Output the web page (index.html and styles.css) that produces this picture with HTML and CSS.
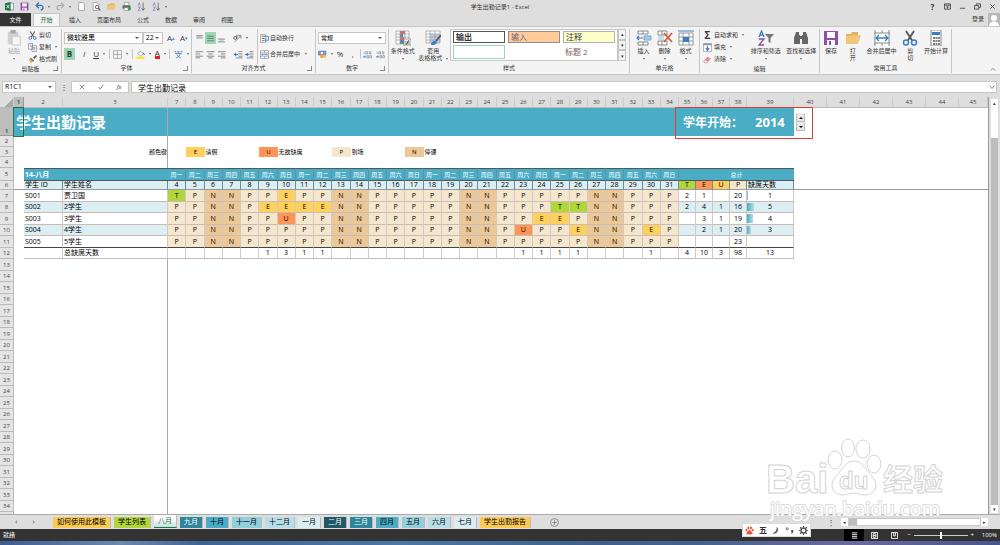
FILE: index.html
```html
<!DOCTYPE html>
<html lang="zh-CN">
<head>
    <meta charset="UTF-8">
    <meta name="viewport" content="width=device-width, initial-scale=1.0">
    <title>学生出勤记录1 - Excel</title>
    <link rel="stylesheet" href="styles.css">
</head>
<body>
    <!-- shared icons -->
    <svg class="sprite" aria-hidden="true">
        <symbol id="i-save" viewBox="0 0 16 16"><path d="M1 1h14v14H1z" fill="#8e4fa8"/><path d="M4 2h8v6H4zM4 10h8v5H4z" fill="#fff"/><path d="M6 11h2v4H6z" fill="#8e4fa8"/></symbol>
        <symbol id="i-folder" viewBox="0 0 16 16"><path d="M1 13V4h5l1-2h6v3" fill="#e2b25c"/><path d="M1 14V6l12-1h3l-3 9z" fill="#f0c67c"/></symbol>
        <symbol id="i-cut" viewBox="0 0 16 16" fill="none"><path d="M4 1l6.500 10M12 1L5.500 11" stroke="#555" stroke-width="1.800"/><circle cx="4" cy="12.500" r="2.500" stroke="#3c7fc0" stroke-width="1.500"/><circle cx="12" cy="12.500" r="2.500" stroke="#3c7fc0" stroke-width="1.500"/></symbol>
        <symbol id="i-copy" viewBox="0 0 16 16"><path d="M1 1h7v10H1zM7 5h8v10H7z" fill="#fff" stroke="#666"/><path d="M3 4h3M3 6h3M9 8h4M9 10h4M9 12h4" stroke="#3c7fc0"/></symbol>
        <symbol id="i-brush" viewBox="0 0 16 16"><path d="M15 1l-5 5" stroke="#555" stroke-width="3"/><path d="M5 5l6 5-2 2-6-5z" fill="#666"/><path d="M1 8l3-1 4 4-2 4z" fill="#eda345"/></symbol>
        <symbol id="i-paste" viewBox="0 0 16 18"><path d="M1 2h12v14H1z" fill="#d2d2d2"/><path d="M4 0h6v4H4z" fill="#aaa"/><path d="M6 7h9v10H6z" fill="#f6f6f6" stroke="#c2c2c2"/></symbol>
        <symbol id="i-top" viewBox="0 0 16 16"><path d="M2 3h12M2 7h12" stroke="#777" stroke-width="1.500"/><path d="M4 5h8" stroke="#999"/></symbol>
        <symbol id="i-mid" viewBox="0 0 16 16"><path d="M2 4h12M2 8h12M2 12h12" stroke="#557a63" stroke-width="1.500"/></symbol>
        <symbol id="i-bot" viewBox="0 0 16 16"><path d="M2 9h12M2 14h12" stroke="#777" stroke-width="1.500"/><path d="M4 11h8" stroke="#999"/></symbol>
        <symbol id="i-left" viewBox="0 0 16 16"><path d="M1 3h13M1 7h8M1 11h13M1 14h8" stroke="#777" stroke-width="1.500"/></symbol>
        <symbol id="i-center" viewBox="0 0 16 16"><path d="M1 3h14M4 7h8M1 11h14M4 14h8" stroke="#777" stroke-width="1.500"/></symbol>
        <symbol id="i-right" viewBox="0 0 16 16"><path d="M2 3h13M7 7h8M2 11h13M7 14h8" stroke="#777" stroke-width="1.500"/></symbol>
        <symbol id="i-outdent" viewBox="0 0 16 16"><path d="M8 3h7M8 7h7M8 11h7M3 14h12" stroke="#777" stroke-width="1.500"/><path d="M7 8H1l3-3M1 8l3 3" stroke="#3c7fc0" stroke-width="1.800" fill="none"/></symbol>
        <symbol id="i-indent" viewBox="0 0 16 16"><path d="M8 3h7M8 7h7M8 11h7M3 14h12" stroke="#777" stroke-width="1.500"/><path d="M0 8h6L3 5M6 8l-3 3" stroke="#3c7fc0" stroke-width="1.800" fill="none"/></symbol>
        <symbol id="i-angle" viewBox="0 0 16 16" fill="none"><path d="M3 14L14 3M14 3v5M14 3H9" stroke="#777" stroke-width="1.500"/><circle cx="4" cy="7" r="2.500" stroke="#555" stroke-width="1.500"/><path d="M7 1v6" stroke="#555" stroke-width="1.500"/></symbol>
        <symbol id="i-wrap" viewBox="0 0 16 16" fill="none"><path d="M1 1h9v14H1z" fill="#fff" stroke="#777"/><path d="M3 4h9M3 8h5M3 12h4" stroke="#555" stroke-width="1.500"/><path d="M12 4h3v7H9m2-3l-3 3 3 3" stroke="#3c7fc0" stroke-width="1.500"/></symbol>
        <symbol id="i-merge" viewBox="0 0 16 16" fill="none"><path d="M1 1h14v14H1zM1 5h14M1 11h14M8 1v4M8 11v4" fill="#fff" stroke="#777"/><path d="M3 8h10M5 6L3 8l2 2M11 6l2 2-2 2" stroke="#3c7fc0" stroke-width="1.200"/></symbol>
        <symbol id="i-border" viewBox="0 0 16 16" fill="none"><path d="M1 1h14v14H1zM8 1v14M1 8h14" stroke="#888"/></symbol>
        <symbol id="i-fill" viewBox="0 0 16 16"><path d="M3 6l5-4 5 5-5 4z" fill="#fff" stroke="#666"/><path d="M13 5l2 4" stroke="#3c7fc0" stroke-width="2"/><path d="M1 12h14v4H1z" fill="#f5ee1e"/></symbol>
        <symbol id="i-phon" viewBox="0 0 16 16" fill="none"><path d="M1 3h3M6 3h4M12 3h3M2 6h12M8 4v2M4 14c4-1 6-4 7-8M5 8c1 3 4 5 7 6" stroke="#3c7fc0" stroke-width="1.500"/></symbol>
        <symbol id="i-money" viewBox="0 0 16 16"><path d="M1 2h13v7H1z" fill="#7aa4cf" stroke="#557"/><circle cx="7" cy="5.500" r="2" fill="#fff"/><path d="M4 8h6v6H4z" fill="#eda345"/><path d="M9 10h5v4H9z" fill="#f2c26b"/></symbol>
        <symbol id="i-dec" viewBox="0 0 16 16" fill="none"><path d="M2 3v4M5 3h3v4H5zM11 3h3v4h-3zM7 10h3v4H7zM12 10h3v4h-3z" stroke="#777"/><path d="M6 12H1l2-2M1 12l2 2" stroke="#3c7fc0" stroke-width="1.500"/></symbol>
        <symbol id="i-cond" viewBox="0 0 16 16"><path d="M1 1h13v13H1z" fill="#fff"/><path d="M5 1h5v3H5zM5 7h4v3H5z" fill="#d9694f"/><path d="M5 4h3v3H5zM5 10h5v4H5z" fill="#4b83bd"/><path d="M1 1h13v13H1zM1 4h13M1 7h13M1 10h13M5 1v13M10 1v13" fill="none" stroke="#999" stroke-width=".7"/><path d="M9 9h7v7H9z" fill="#fff" stroke="#777" stroke-width=".7"/><path d="M10 12h5M10 14h5M14 10l-3 5" stroke="#444" stroke-width=".8"/></symbol>
        <symbol id="i-tbl" viewBox="0 0 16 16"><path d="M1 1h14v12H1z" fill="#fff"/><path d="M5 4h10v9H5z" fill="#b8d2ea"/><path d="M1 1h14v12H1zM1 4h14M1 7h14M1 10h14M5 1v12M10 1v12" fill="none" stroke="#999" stroke-width=".7"/><path d="M16 5l-5 6" stroke="#555" stroke-width="1.800"/><path d="M6 15c0-4 4-5 6-3-1 3-3 3-6 3z" fill="#3c7fc0"/></symbol>
        <symbol id="i-ins" viewBox="0 0 16 16"><path d="M2 1h10v3H2zM2 12h10v3H2zM7 1v3M7 12v3" fill="#fff" stroke="#888"/><path d="M8 6h7v4H8z" fill="#a9cbe8" stroke="#7aa4cf"/><path d="M7 8H1m2-2L1 8l2 2" fill="none" stroke="#3c7fc0" stroke-width="1.200"/></symbol>
        <symbol id="i-del" viewBox="0 0 16 16"><path d="M1 1h9v4H1zM1 11h9v4H1zM5 1v4M5 11v4" fill="#fff" stroke="#888"/><path d="M1 6h6v4H1z" fill="#c6ddf0"/><path d="M7 3l8 9M15 3l-8 9" stroke="#d9593d" stroke-width="1.800"/></symbol>
        <symbol id="i-fmt" viewBox="0 0 16 16"><path d="M1 3h14v12H1zM1 7h14M1 11h14M5 3v12M11 3v12" fill="#fff" stroke="#999"/><path d="M5 7h6v5H5z" fill="#3c7fc0"/><path d="M2 1h12M1 0v2M15 0v2" stroke="#3c7fc0"/></symbol>
        <symbol id="i-down" viewBox="0 0 16 16"><path d="M1 1h14v14H1z" fill="#fff" stroke="#777"/><path d="M1 1h14v3H1z" fill="#999"/><path d="M8 5v7M5 9l3 4 3-4" fill="none" stroke="#3c7fc0" stroke-width="2"/></symbol>
        <symbol id="i-erase" viewBox="0 0 16 16"><path d="M1 11l7-8 6 3-7 8H3z" fill="#e8879c"/><path d="M1 11l3-3 5 4-2 2H3z" fill="#fbd9df" stroke="#c66" stroke-width=".7"/></symbol>
        <symbol id="i-sort" viewBox="0 0 16 16" fill="none"><path d="M1 7l2.500-6L6 7M2 5h3" stroke="#3c7fc0" stroke-width="1.300"/><path d="M1 9h5l-5 6h5" stroke="#8e4fa8" stroke-width="1.300"/><path d="M7 4h9l-3.500 4v5l-2-1V8z" fill="#777"/></symbol>
        <symbol id="i-find" viewBox="0 0 16 16"><path d="M3 2h3v3h1v9H1V8zM13 2h-3v3H9v9h6V8z" fill="#666"/><path d="M6 6h4v3H6z" fill="#666"/></symbol>
        <symbol id="i-fit" viewBox="0 0 16 16" fill="none"><path d="M1 0h14v16H1z" fill="#fff"/><path d="M1 0v16M15 0v16M0 3h16M0 13h16M8 0v3M8 13v3" stroke="#888"/><path d="M2 8h12M5 5L2 8l3 3M11 5l3 3-3 3" stroke="#3c7fc0" stroke-width="1.300"/></symbol>
        <symbol id="i-calc" viewBox="0 0 16 16"><path d="M3 0h10v16H3z" fill="#fff" stroke="#888"/><path d="M4 2h8v3H4z" fill="#3c7fc0"/><path d="M5 8h2M7.500 8h2M10 8h2M5 11h2M7.500 11h2M10 11h2M5 14h2M7.500 14h2M10 14h2" stroke="#555" stroke-width="1.500"/></symbol>
        <symbol id="i-az" viewBox="0 0 16 16" fill="none"><path d="M2 7l2-6 2 6M2 9h4l-4 6h4" stroke="#8a7bb5" stroke-width="1.300"/><path d="M11 1v13M8 11l3 4 3-4" stroke="#666" stroke-width="1.500"/></symbol>
        <symbol id="i-paw" viewBox="0 0 16 16"><ellipse cx="2.500" cy="7" rx="1.800" ry="2.300"/><ellipse cx="6" cy="3.500" rx="1.800" ry="2.500"/><ellipse cx="10.500" cy="3.500" rx="1.800" ry="2.500"/><ellipse cx="13.700" cy="7" rx="1.800" ry="2.300"/><path d="M8 7c2 0 3 3 5 4.500S12 16 8 14.500C4 16 1 14 3 11.500S6 7 8 7z"/></symbol>
    </svg>

    <header class="titlebar">
        <div class="quick">
            <svg class="ico" viewBox="0 0 16 16"><path d="M8 2h7v12H8z" fill="#fff" stroke="#1f7346"/><path d="M0 2l10-2v16L0 14z" fill="#1f7346"/><path d="M2.500 5l5 6M7.500 5l-5 6" stroke="#fff" stroke-width="1.500"/></svg>
            <button aria-label="保存"><svg class="ico"><use href="#i-save"/></svg></button>
            <button class="caret" aria-label="撤消"><svg class="ico" viewBox="0 0 16 16"><path d="M3 6h7c6 0 5 8 0 8M7 1L2 6l5 5" fill="none" stroke="#3c6fae" stroke-width="2.300"/></svg></button>
            <button class="caret dim" aria-label="恢复"><svg class="ico" viewBox="0 0 16 16"><path d="M13 6H6c-6 0-5 8 0 8M9 1l5 5-5 5" fill="none" stroke="#aaa" stroke-width="2"/></svg></button>
            <button aria-label="新建"><svg class="ico" viewBox="0 0 16 16"><path d="M3 1h7l3 3v11H3z" fill="#fff" stroke="#777"/></svg></button>
            <button aria-label="打印预览"><svg class="ico" viewBox="0 0 16 16"><path d="M2 1h7l3 3v11H2z" fill="#fff" stroke="#777"/><circle cx="9" cy="9" r="3" fill="#fff" stroke="#555" stroke-width="1.500"/><path d="M11 11l4 4" stroke="#555" stroke-width="2"/></svg></button>
            <button aria-label="打开"><svg class="ico"><use href="#i-folder"/></svg></button>
            <button aria-label="打印"><svg class="ico" viewBox="0 0 16 16"><path d="M4 1h8v5H4z" fill="#fff" stroke="#777"/><path d="M1 6h14v6H1z" fill="#666"/><path d="M4 10h8v5H4z" fill="#fff" stroke="#777"/><circle cx="13" cy="12" r="3" fill="#3f9a63"/></svg></button>
            <button aria-label="升序"><svg class="ico"><use href="#i-az"/></svg></button>
            <button class="caret" aria-label="降序"><svg class="ico"><use href="#i-az"/></svg></button>
        </div>
        <h1>学生出勤记录1 - Excel</h1>
        <div class="window-buttons">
            <button>?</button>
            <button aria-label="功能区"><svg viewBox="0 0 16 16"><path d="M1 2h14v12H1zM1 5h14M8 13V8M5 10l3-3 3 3"/></svg></button>
            <button aria-label="最小化"><svg viewBox="0 0 16 16"><path d="M2 12h12"/></svg></button>
            <button aria-label="还原"><svg viewBox="0 0 16 16"><path d="M1 6h10v8H1zM5 6V2h10v8h-4"/></svg></button>
            <button aria-label="关闭"><svg viewBox="0 0 16 16"><path d="M3 3l10 10M13 3L3 13"/></svg></button>
        </div>
    </header>

    <nav class="tabs">
        <button class="file">文件</button>
        <button class="active">开始</button>
        <button>插入</button>
        <button class="wide">页面布局</button>
        <button>公式</button>
        <button>数据</button>
        <button>审阅</button>
        <button>视图</button>
        <a class="login" href="#">登录</a>
        <svg class="avatar" viewBox="0 0 12 13"><path d="M0 0h12v13H0z" fill="#b9b9b9"/><circle cx="6" cy="5" r="3" fill="#fff"/><path d="M1 13c0-6 10-6 10 0z" fill="#fff"/></svg>
    </nav>

    <section class="ribbon">
        <div class="group g-clip">
            <div class="body">
                <button class="big dim"><svg><use href="#i-paste"/></svg>粘贴<i class="drop"></i></button>
                <div class="stack">
                    <button><svg class="ico"><use href="#i-cut"/></svg>剪切</button>
                    <button class="caret"><svg class="ico"><use href="#i-copy"/></svg>复制</button>
                    <button><svg class="ico"><use href="#i-brush"/></svg>格式刷</button>
                </div>
            </div>
            <div class="label launcher">剪贴板</div>
        </div>
        <div class="group g-font">
            <div class="body lines">
                <div class="line">
                    <span class="combo font-name"><select aria-label="字体"><option>微软雅黑</option></select></span>
                    <span class="combo font-size"><select aria-label="字号"><option>22</option></select></span>
                    <button class="grow">A<sup>▴</sup></button>
                    <button class="grow">A<sup>▾</sup></button>
                </div>
                <div class="line spread">
                    <button class="on"><b>B</b></button>
                    <button><em>I</em></button>
                    <button class="caret"><u>U</u></button>
                    <span class="bar"></span>
                    <button class="caret" aria-label="边框"><svg class="ico"><use href="#i-border"/></svg></button>
                    <span class="bar"></span>
                    <button class="caret" aria-label="填充颜色"><svg class="ico"><use href="#i-fill"/></svg></button>
                    <button class="caret"><span class="font-color">A</span></button>
                    <span class="bar"></span>
                    <button class="caret" aria-label="拼音"><svg class="ico"><use href="#i-phon"/></svg></button>
                </div>
            </div>
            <div class="label launcher">字体</div>
        </div>
        <div class="group g-align">
            <div class="body">
                <div class="lines align-icons">
                    <div class="line">
                        <button aria-label="顶端对齐"><svg class="ico"><use href="#i-top"/></svg></button>
                        <button class="on" aria-label="垂直居中"><svg class="ico"><use href="#i-mid"/></svg></button>
                        <button aria-label="底端对齐"><svg class="ico"><use href="#i-bot"/></svg></button>
                        <button class="caret push" aria-label="方向"><svg class="ico"><use href="#i-angle"/></svg></button>
                    </div>
                    <div class="line">
                        <button aria-label="左对齐"><svg class="ico"><use href="#i-left"/></svg></button>
                        <button aria-label="居中"><svg class="ico"><use href="#i-center"/></svg></button>
                        <button aria-label="右对齐"><svg class="ico"><use href="#i-right"/></svg></button>
                        <button class="push" aria-label="减少缩进"><svg class="ico"><use href="#i-outdent"/></svg></button>
                        <button aria-label="增加缩进"><svg class="ico"><use href="#i-indent"/></svg></button>
                    </div>
                </div>
                <div class="lines wrap">
                    <button><svg class="ico"><use href="#i-wrap"/></svg>自动换行</button>
                    <button class="caret"><svg class="ico"><use href="#i-merge"/></svg>合并后居中</button>
                </div>
            </div>
            <div class="label launcher">对齐方式</div>
        </div>
        <div class="group g-number">
            <div class="body lines">
                <div class="line"><span class="combo number-format"><select aria-label="数字格式"><option>常规</option></select></span></div>
                <div class="line spread">
                    <button class="caret" aria-label="会计格式"><svg class="ico"><use href="#i-money"/></svg></button>
                    <button>%</button>
                    <button>,</button>
                    <span class="bar"></span>
                    <button aria-label="增加小数位"><svg class="ico"><use href="#i-dec"/></svg></button>
                    <button aria-label="减少小数位"><svg class="ico"><use href="#i-dec"/></svg></button>
                </div>
            </div>
            <div class="label launcher">数字</div>
        </div>
        <div class="group g-style">
            <div class="body">
                <button class="big"><svg><use href="#i-cond"/></svg>条件格式<i class="drop"></i></button>
                <button class="big"><svg><use href="#i-tbl"/></svg>套用<span class="caret">表格格式</span></button>
                <div class="gallery">
                    <button class="swatch output">输出</button>
                    <button class="swatch input">输入</button>
                    <button class="swatch note">注释</button>
                    <button class="swatch picked" aria-label="常规"></button>
                    <span></span>
                    <button class="swatch heading">标题 2</button>
                </div>
                <div class="gallery-scroll">
                    <button>▴</button>
                    <button>▾</button>
                    <button>▾</button>
                </div>
            </div>
            <div class="label">样式</div>
        </div>
        <div class="group g-cells">
            <div class="body">
                <button class="big"><svg><use href="#i-ins"/></svg>插入<i class="drop"></i></button>
                <button class="big"><svg><use href="#i-del"/></svg>删除<i class="drop"></i></button>
                <button class="big"><svg><use href="#i-fmt"/></svg>格式<i class="drop"></i></button>
            </div>
            <div class="label">单元格</div>
        </div>
        <div class="group g-edit">
            <div class="body">
                <div class="stack">
                    <button class="caret"><span class="sigma">Σ</span>自动求和</button>
                    <button class="caret"><svg class="ico"><use href="#i-down"/></svg>填充</button>
                    <button class="caret"><svg class="ico"><use href="#i-erase"/></svg>清除</button>
                </div>
                <button class="big"><svg><use href="#i-sort"/></svg>排序和筛选<i class="drop"></i></button>
                <button class="big"><svg><use href="#i-find"/></svg>查找和选择<i class="drop"></i></button>
            </div>
            <div class="label">编辑</div>
        </div>
        <div class="group g-tools">
            <div class="body">
                <button class="big"><svg><use href="#i-save"/></svg>保存</button>
                <button class="big"><svg><use href="#i-folder"/></svg>打<br>开</button>
                <button class="big"><svg><use href="#i-fit"/></svg>合并后居中</button>
                <button class="big"><svg><use href="#i-cut"/></svg>剪<br>切</button>
                <button class="big"><svg><use href="#i-calc"/></svg>开始计算</button>
            </div>
            <div class="label">常用工具</div>
        </div>
        <button class="collapse" aria-label="折叠功能区"><svg viewBox="0 0 8 8"><path d="M1 6l3-3 3 3"/></svg></button>
    </section>

    <section class="formula-bar">
        <span class="combo name-box"><select aria-label="名称框"><option>R1C1</option></select></span>
        <span class="dots">⋮</span>
        <div class="fx">
            <button aria-label="取消"><svg viewBox="0 0 8 8"><path d="M1 1l6 6M7 1L1 7"/></svg></button>
            <button aria-label="输入"><svg viewBox="0 0 8 8"><path d="M1 4l2 3 4-6"/></svg></button>
            <button><em>fx</em></button>
        </div>
        <div class="formula">
            <input type="text" aria-label="编辑栏" value="学生出勤记录">
            <button aria-label="展开编辑栏"><svg viewBox="0 0 8 8"><path d="M1 2l3 4 3-4"/></svg></button>
        </div>
    </section>

    <main class="workspace">
        <div class="sheet">
            <table id="grid"></table>
        </div>
        <div class="v-scroll">
            <button>▴</button>
            <div class="track"><div class="thumb"></div></div>
            <button>▾</button>
        </div>
    </main>

    <nav class="sheet-tabs">
        <div class="arrows"><button>‹</button><button>›</button></div>
        <button class="yellow">如何使用此模板</button>
        <button class="lime">学生列表</button>
        <button class="current">八月</button>
        <button class="teal">九月</button>
        <button class="blue">十月</button>
        <button class="sky">十一月</button>
        <button class="pale">十二月</button>
        <button class="mist">一月</button>
        <button class="deep">二月</button>
        <button class="teal">三月</button>
        <button class="blue">四月</button>
        <button class="sky">五月</button>
        <button class="pale">六月</button>
        <button class="mist">七月</button>
        <button class="yellow">学生出勤报告</button>
        <button class="add" aria-label="新工作表"><svg viewBox="0 0 16 16"><circle cx="8" cy="8" r="7"/><path d="M4 8h8M8 4v8"/></svg></button>
        <span class="dots">⋮</span>
        <div class="h-scroll">
            <button>◂</button>
            <div class="track"><div class="thumb"></div></div>
            <button>▸</button>
        </div>
    </nav>

    <footer class="status">
        <span>就绪</span>
        <div class="views">
            <button class="on" aria-label="普通"><svg viewBox="0 0 16 16"><path d="M2 2h12M2 6h12M2 10h12M2 14h12"/></svg></button>
            <button aria-label="页面布局"><svg viewBox="0 0 16 16"><path d="M1 1h14v14H1zM5 4h6v8H5zM5 8h6"/></svg></button>
            <button aria-label="分页预览"><svg viewBox="0 0 16 16"><path d="M1 1h14v14H1zM6 1v8h4V1"/></svg></button>
        </div>
        <button>−</button>
        <input type="range" aria-label="显示比例" min="10" max="190" value="100">
        <button>+</button>
        <span class="percent">100%</span>
    </footer>
    <div class="taskbar"></div>

    <svg class="watermark" viewBox="0 0 190 90">
        <g class="outline">
            <text x="3" y="58" class="brand">Bai</text>
            <ellipse cx="85" cy="13" rx="6.500" ry="9"/>
            <ellipse cx="100" cy="14" rx="7" ry="9"/>
            <ellipse cx="72" cy="25" rx="7" ry="9"/>
            <ellipse cx="111" cy="29" rx="7" ry="9"/>
            <path d="M91 26c8 0 11 8 17 14 9 9 5 20-6 20-5 0-7-2-11-2s-7 2-11 2c-11 0-15-11-6-20 6-6 9-14 17-14z"/>
            <text x="76" y="54" class="du">du</text>
            <text x="120" y="55" class="cn">经验</text>
        </g>
        <text x="7" y="81" class="site">jingyan.baidu.com</text>
    </svg>

    <div class="ime">
        <svg class="paw"><use href="#i-paw"/></svg>
        <b>五</b>
        <svg viewBox="0 0 16 16"><path d="M10 1c6 6 0 15-8 12 6-1 9-6 8-12z" fill="#555"/></svg>
        <svg viewBox="0 0 16 16"><circle cx="4" cy="5" r="2" fill="none" stroke="#555" stroke-width="1.500"/><path d="M11 7h4c0 4-1 6-4 7 1-2 1-3 0-4z" fill="#555"/></svg>
        <svg viewBox="0 0 16 16"><circle cx="8" cy="8" r="4.500" fill="none" stroke="#555" stroke-width="2.500"/><path d="M8 0v3M8 13v3M0 8h3M13 8h3M2 2l2 2M12 12l2 2M14 2l-2 2M4 12l-2 2" stroke="#555" stroke-width="2"/></svg>
    </div>

    <script src="script.js"></script>
</body>
</html>
```

FILE: styles.css
```css
:root {
    --chrome: #dedede;
    --ribbon: #f4f4f4;
    --line: #c6c6c6;
    --text: #333;
    --excel-green: #217346;
    --on-green: #9fd5b7;
    --teal: #4bacc6;
    --teal-light: #daeef3;
    --present: #f5e6ce;
    --no-class: #ecc797;
    --excused: #ffd15c;
    --unexcused: #ff9554;
    --tardy: #b0d63c;
    --font-family: "Open Sans", "Noto Sans CJK SC", sans-serif;
}

* {
    box-sizing: border-box;
}

body {
    margin: 0;
    height: 100vh;
    overflow: hidden;
    display: flex;
    flex-direction: column;
    background-color: var(--chrome);
    color: var(--text);
    font-family: var(--font-family);
    font-size: 6px;
    line-height: 8px;
}

button, select, input {
    margin: 0;
    padding: 0;
    border: none;
    background: none;
    color: inherit;
    font: inherit;
}

button {
    display: flex;
    align-items: center;
    justify-content: center;
    white-space: nowrap;
}

.sprite {
    position: absolute;
    width: 0;
    height: 0;
}

.ico {
    width: 9px;
    height: 9px;
    flex: none;
}

.caret::after {
    content: "";
    flex: none;
    margin-left: 4px;
    border: 1px solid transparent;
    border-top: 2px solid #666;
    border-bottom: none;
}

.dim {
    color: #aaa;
}

/* title bar */
.titlebar {
    height: 13px;
    flex: none;
    display: grid;
    grid-template-columns: 1fr auto 1fr;
    align-items: center;
}

.titlebar h1 {
    margin: 0;
    font-size: 6px;
    font-weight: normal;
}

.quick {
    display: flex;
    gap: 6px;
    padding-left: 5px;
}

.window-buttons {
    display: flex;
    justify-content: flex-end;
    gap: 8px;
    padding-right: 4px;
}

.window-buttons button {
    width: 7px;
    font-size: 8px;
    font-weight: bold;
}

.window-buttons svg {
    width: 7px;
    height: 7px;
    fill: none;
    stroke: #444;
    stroke-width: 2;
}

/* ribbon tabs */
.tabs {
    height: 13px;
    flex: none;
    display: flex;
    align-items: stretch;
}

.tabs button {
    width: 28px;
}

.tabs .wide {
    width: 40px;
}

.tabs .file {
    width: 31px;
    background-color: #333;
    color: white;
}

.tabs .active {
    width: 27px;
    margin: 0 1px 0 2px;
    background-color: var(--ribbon);
    border: 1px solid var(--line);
    border-bottom: none;
    color: var(--excel-green);
}

.login {
    margin-left: auto;
    padding: 2px 4px;
    color: var(--text);
    text-decoration: none;
}

.avatar {
    width: 12px;
}

/* ribbon */
.ribbon {
    height: 49px;
    flex: none;
    display: flex;
    padding: 2px 0 1px;
    background-color: var(--ribbon);
    border-top: 1px solid var(--line);
    border-bottom: 1px solid var(--line);
}

.group {
    flex: none;
    display: flex;
    flex-direction: column;
    border-right: 1px solid var(--line);
}

.g-clip { width: 62px; }
.g-font { width: 130px; }
.g-align { width: 124px; }
.g-number { width: 73px; }
.g-style { width: 241px; }
.g-cells { width: 70px; }
.g-edit { width: 120px; }
.g-tools { width: 132px; }

.body {
    flex: 1;
    display: flex;
}

.label {
    position: relative;
    height: 9px;
    text-align: center;
}

.launcher::after {
    content: "";
    position: absolute;
    right: 3px;
    bottom: 2px;
    width: 4px;
    height: 4px;
    border-right: 1px solid #888;
    border-bottom: 1px solid #888;
}

.big {
    flex: 1 1 auto;
    flex-direction: column;
    justify-content: flex-start;
    padding-top: 1px;
    line-height: 7px;
}

.big svg {
    width: 16px;
    height: 16px;
    flex: none;
    margin-bottom: 2px;
}

.big .caret {
    display: flex;
    align-items: center;
}

.drop {
    margin-top: 3px;
    border: 1px solid transparent;
    border-top: 2px solid #666;
    border-bottom: none;
}

.stack {
    display: flex;
    flex-direction: column;
    align-items: flex-start;
    padding-right: 4px;
}

.stack button {
    height: 12px;
    gap: 2px;
}

.stack .caret::after {
    margin-left: 2px;
}

.g-edit .stack {
    padding-left: 3px;
}

.sigma {
    width: 9px;
    font-size: 10px;
    font-weight: bold;
}

.lines {
    display: flex;
    flex-direction: column;
    gap: 4px;
    padding: 3px 2px 0;
}

.line {
    display: flex;
    align-items: center;
    height: 12px;
}

.line button {
    min-width: 11px;
    height: 12px;
    font-size: 8px;
}

.spread {
    justify-content: space-between;
}

.on {
    background-color: var(--on-green);
}

.bar {
    width: 1px;
    height: 10px;
    background-color: var(--line);
}

.font-color {
    height: 10px;
    border-bottom: 3px solid #e02020;
}

.combo {
    position: relative;
    display: flex;
    height: 12px;
    background-color: white;
    border: 1px solid var(--line);
}

.combo::after {
    content: "";
    position: absolute;
    right: 3px;
    top: 4px;
    border: 2px solid transparent;
    border-top-color: #555;
    border-bottom: none;
    pointer-events: none;
}

.combo select {
    width: 100%;
    padding-left: 2px;
    appearance: none;
    font-size: 7px;
    color: black;
}

.number-format select {
    font-size: 6px;
}

.font-name { width: 82px; }
.font-size { width: 21px; }
.number-format { width: 69px; }

.line .grow {
    min-width: 13px;
    padding-left: 3px;
}

.grow sup {
    font-size: 5px;
    color: #3c7fc0;
}

.align-icons {
    width: 66px;
    border-right: 1px solid var(--line);
}

.align-icons .push {
    margin-left: 6px;
}

.wrap button {
    height: 12px;
    gap: 1px;
    align-self: flex-start;
}

.gallery {
    flex: none;
    width: 168px;
    height: 32px;
    display: grid;
    grid-template-columns: repeat(3, 1fr);
    grid-template-rows: 12px 14px;
    gap: 2px 3px;
    padding: 1px 2px;
    background-color: white;
    border: 1px solid var(--line);
}

.swatch {
    justify-content: flex-start;
    padding-left: 2px;
    font-size: 8px;
}

.output {
    border: 1px solid #555;
    font-weight: bold;
}

.input {
    background-color: #ffcc99;
    border: 1px solid #8f8f8f;
    color: #6b5c80;
}

.note {
    background-color: #ffffcc;
    border: 1px solid #b2b2b2;
}

.heading {
    color: #7b6258;
}

.picked {
    border: 1px solid var(--on-green);
}

.gallery-scroll {
    width: 8px;
    height: 32px;
    display: flex;
    flex-direction: column;
    margin-right: 3px;
}

.gallery-scroll button {
    flex: 1;
    border: 1px solid var(--line);
    font-size: 5px;
}

.g-cells .body {
    padding: 0 3px;
}

.collapse {
    margin-left: auto;
    align-self: flex-end;
    padding: 0 4px 1px;
}

.collapse svg, .fx svg, .formula svg {
    width: 6px;
    height: 6px;
    fill: none;
    stroke: #666;
}

/* formula bar */
.formula-bar {
    height: 22px;
    flex: none;
    display: flex;
    align-items: center;
    padding: 2px 3px 0 2px;
}

.name-box {
    width: 54px;
}

.dots {
    width: 15px;
    text-align: center;
    font-size: 8px;
}

.fx {
    width: 58px;
    height: 12px;
    display: flex;
    justify-content: space-around;
    margin-right: 2px;
    background-color: white;
    border: 1px solid var(--line);
}

.formula {
    flex: 1;
    height: 12px;
    display: flex;
    background-color: white;
    border: 1px solid var(--line);
}

.formula input {
    flex: 1;
    padding-left: 6px;
    font-size: 8px;
    color: black;
}

.formula button {
    width: 9px;
}

/* worksheet */
.workspace {
    flex: 1;
    min-height: 0;
    display: flex;
}

.sheet {
    flex: 1;
    overflow: hidden;
    background-color: white;
    border-right: 1px solid #999;
}

#grid {
    width: 100%;
    table-layout: fixed;
    border-collapse: separate;
    border-spacing: 0;
    font-size: 7px;
    line-height: 8px;
    color: black;
}

#grid td, #grid th {
    padding: 0;
    text-align: center;
    white-space: nowrap;
    font-weight: normal;
}

#grid tr { height: 11px; }
#grid tr.odd { height: 12px; }
#grid tr.title-row { height: 28px; }
#grid tr.legend-row { height: 10px; }
#grid tr.week-row { height: 13px; }
#grid tr.date-row { height: 9px; }

.c-head { width: 14px; }
.c-mark { width: 10px; }
.c-id { width: 39px; }
.c-name { width: 105px; }
.c-sum { width: 17px; }
.c-absent { width: 47px; }
.c-free { width: 33px; }
.c-last { width: 29px; }

#grid th {
    background-color: #e4e4e4;
    border-right: 1px solid #bbb;
    border-bottom: 1px solid #bbb;
    color: #444;
    font-size: 6px;
}

#grid .corner, #grid .col-head {
    background-color: var(--chrome);
    border-right-color: #ccc;
}

#grid .corner {
    background: linear-gradient(135deg, var(--chrome) 65%, #aaa 65%);
}

#grid .picked-head {
    background-color: #bdbdbd;
    border-color: #999;
    color: var(--excel-green);
    font-weight: bold;
}

#grid .title-row .picked-head {
    vertical-align: bottom;
}

#grid .freeze-x {
    border-right: 1px solid #aaa;
}

#grid .freeze-y td {
    border-bottom: 1px solid #999;
}

.title-row td {
    background-color: var(--teal);
    color: white;
    font-weight: bold;
}

#grid .title-row .free {
    background-color: white;
}

#grid .title-row .title {
    position: relative;
    text-align: left;
    font-size: 15px;
    line-height: 20px;
    font-weight: bold;
    padding-left: 2px;
}

.cursor {
    position: absolute;
    inset: -1px 0 -1px -1px;
    border: 1px solid var(--excel-green);
}

#grid .year {
    position: relative;
    text-align: left;
    padding-left: 4px;
    font-size: 12px;
    line-height: 16px;
    font-weight: bold;
}

.year-value {
    margin-left: 12px;
    font-size: 13px;
}

.highlight {
    position: absolute;
    left: -4px;
    top: -1px;
    width: 138px;
    height: 32px;
    border: 1px solid #e03c31;
}

.spinner {
    position: absolute;
    left: 117px;
    top: 5px;
    width: 9px;
}

.spinner button {
    width: 9px;
    height: 9px;
    background-color: #e8e8e8;
    border: 1px solid #bbb;
    border-top-color: #eee;
}

.spinner button::after {
    content: "";
    border: 2px solid transparent;
    border-top-color: black;
    border-bottom: none;
}

.spinner .up::after {
    border: 2px solid transparent;
    border-top: none;
    border-bottom-color: black;
}

#grid .right { text-align: right; }
#grid .left { text-align: left; padding-left: 1px; }
.legend-row td { font-size: 6px; }

#grid .week-row .in {
    background-color: var(--teal);
    border-top: 1px solid #555;
    border-bottom: 1px solid #555;
    color: white;
    font-size: 6px;
}

#grid .week-row .day, #grid .date-row .in {
    border-right: 1px solid #66909c;
}

#grid .week-row .month {
    font-size: 7px;
    font-weight: bold;
}

.date-row .in, .banded .in {
    background-color: var(--teal-light);
}

#grid .record .in {
    border-right: 1px solid #d3c9c4;
    border-bottom: 1px solid #c9bcb5;
}

#grid .last .in {
    border-bottom-color: #444;
}

#grid .T { background-color: var(--tardy); }
#grid .E { background-color: var(--excused); }
#grid .U { background-color: var(--unexcused); }
#grid .P { background-color: var(--present); }
#grid .N { background-color: var(--no-class); }

#grid .absent {
    position: relative;
}

.data-bar {
    position: absolute;
    left: 0;
    top: 1px;
    bottom: 1px;
    background: linear-gradient(to right, #4bacc6, #b5dde8);
}

/* scroll bars */
.v-scroll {
    width: 11px;
    display: flex;
    flex-direction: column;
    align-items: center;
    padding: 2px 2px 1px;
}

.v-scroll button, .h-scroll button {
    width: 7px;
    height: 8px;
    background-color: white;
    font-size: 5px;
}

.v-scroll .track {
    flex: 1;
    width: 7px;
    background-color: #bcbcbc;
}

.v-scroll .thumb {
    height: 31px;
    background-color: white;
}

/* sheet tabs */
.sheet-tabs {
    height: 15px;
    flex: none;
    display: flex;
    align-items: center;
    gap: 3px;
    border-top: 1px solid #aaa;
    padding-right: 12px;
    font-size: 7px;
}

.sheet-tabs > button {
    height: 11px;
    padding: 0 4px;
    border-right: 1px solid #bbb;
    color: black;
}

.arrows {
    width: 50px;
    display: flex;
    justify-content: space-evenly;
}

.sheet-tabs .yellow { background-color: #fccb55; }
.sheet-tabs .lime { background-color: #b0d63c; }
.sheet-tabs .teal { background-color: #2f869c; color: white; }
.sheet-tabs .blue { background-color: #4bacc6; }
.sheet-tabs .sky { background-color: #8fd0dc; }
.sheet-tabs .pale { background-color: #b7dfe9; }
.sheet-tabs .mist { background-color: #daeef3; }
.sheet-tabs .deep { background-color: #205867; color: white; }

.sheet-tabs .current {
    height: 13px;
    align-self: flex-start;
    background: linear-gradient(white 30%, #bfe0dc);
    border-bottom: 1px solid var(--excel-green);
    color: var(--excel-green);
}

.sheet-tabs .add {
    margin-left: 12px;
    border: none;
}

.add svg {
    width: 9px;
    height: 9px;
    fill: none;
    stroke: #555;
}

.sheet-tabs .dots {
    margin-left: auto;
}

.h-scroll {
    width: 147px;
    display: flex;
}

.h-scroll .track {
    flex: 1;
    background-color: white;
    border: 1px solid var(--line);
}

.h-scroll .thumb {
    width: 8px;
    height: 6px;
    background-color: #bcbcbc;
}

/* status bar */
.status {
    height: 12px;
    flex: none;
    display: flex;
    align-items: center;
    gap: 3px;
    padding: 0 3px;
    background-color: #333;
    color: white;
}

.views {
    display: flex;
    margin-left: auto;
}

.views button {
    width: 20px;
    height: 12px;
}

.views .on {
    background-color: black;
}

.views svg {
    width: 7px;
    height: 7px;
    fill: none;
    stroke: white;
    stroke-width: 2;
}

.status input {
    width: 54px;
    height: 7px;
    appearance: none;
    background: linear-gradient(#ccc, #ccc) center / 100% 1px no-repeat;
}

.status input::-webkit-slider-thumb {
    appearance: none;
    width: 2px;
    height: 7px;
    background-color: white;
}

.percent {
    width: 20px;
    text-align: right;
}

.taskbar {
    height: 4px;
    flex: none;
    background: linear-gradient(to right, #3d5c94, #6d87ae 12%, #3f6397 20%, #4a78a8 40%, #3f5f8c 60%, #44628f 70%, #6b6a9f 85%, #45568c);
}

/* floating input method bar */
.ime {
    position: absolute;
    right: 189px;
    bottom: 8px;
    width: 69px;
    height: 14px;
    display: flex;
    align-items: center;
    justify-content: space-around;
    background-color: white;
    border: 1px solid #ddd;
}

.ime svg {
    width: 9px;
    height: 9px;
}

.ime b {
    font-size: 8px;
}

.ime .paw {
    fill: #e2583e;
}

.watermark {
    position: absolute;
    right: 47px;
    bottom: 20px;
    width: 190px;
    height: 90px;
    pointer-events: none;
}

.outline {
    fill: white;
    stroke: #d4d4d4;
    font-weight: bold;
}

.brand { font: bold 40px "Liberation Sans", sans-serif; }
.du { font: bold 24px "Liberation Sans", sans-serif; }
.cn { font-size: 30px; }

.site {
    font-size: 20px;
    fill: white;
    stroke: #dcdcdc;
    stroke-width: 2;
    paint-order: stroke;
}
```

FILE: script.js
```js
const grid = document.getElementById('grid');
const weekdays = ['周一', '周二', '周三', '周四', '周五', '周六', '周日'];
const firstDay = 4;
const dayCount = 28;
const rowCount = 35;

// marks: day of month -> code, every other day is P or N
const students = [
    { id: 'S001', name: '贾卫国', marks: { 4: 'T', 10: 'E' }, sums: [2, 1, '', 20], absent: 1 },
    { id: 'S002', name: '2学生', marks: { 9: 'E', 10: 'E', 11: 'E', 12: 'E', 25: 'T', 26: 'T' }, sums: [2, 4, 1, 16], absent: 5 },
    { id: 'S003', name: '3学生', marks: { 10: 'U', 24: 'E', 25: 'E' }, sums: ['', 3, 1, 19], absent: 4 },
    { id: 'S004', name: '4学生', marks: { 23: 'U', 26: 'E', 30: 'E' }, sums: ['', 2, 1, 20], absent: 3 },
    { id: 'S005', name: '5学生', marks: {}, sums: ['', '', '', 23], absent: 0 }
];
const dayTotals = { 9: 1, 10: 3, 11: 1, 12: 1, 23: 1, 24: 1, 25: 1, 26: 1, 30: 1 };

function td(text, cls = '', span = 1) {
    return `<td class="${cls}" colspan="${span}">${text}</td>`;
}

function days(fn) {
    let html = '';
    for (let i = 0; i < dayCount; i++) html += fn(i, firstDay + i);
    return html;
}

function row(n, cls, cells) {
    const head = n === 1 ? 'picked-head' : '';
    return `<tr class="${cls}"><th class="${head}">${n}</th>${cells}</tr>`;
}

const free = td('', 'free', 6);
const blank = td('') + td('') + td('', 'freeze-x') + td('', '', 33) + free;

function columns() {
    const col = (cls, n = 1) => `<col class="${cls}">`.repeat(n);
    return '<colgroup>' + col('c-head') + col('c-mark') + col('c-id') + col('c-name') +
        col('', dayCount) + col('c-sum', 4) + col('c-absent') + col('c-free', 5) + col('c-last') + '</colgroup>';
}

function header() {
    let html = '<tr><th class="corner"></th><th class="col-head picked-head">1</th>';
    for (let n = 2; n <= 45; n++) {
        if (n > 3 && n < 7) continue;
        html += `<th class="col-head">${n}</th>`;
    }
    return html + '</tr>';
}

function titleRow() {
    const year = '学年开始：<span class="year-value">2014</span><div class="highlight"></div>' +
        '<div class="spinner"><button class="up" aria-label="增加"></button><button aria-label="减少"></button></div>';
    return td('学生出勤记录<div class="cursor"></div>', 'title') + td('') + td('', 'freeze-x') +
        td('', '', dayCount) + td(year, 'year', 5) + free;
}

function legendRow() {
    const item = (code, text) => td(code, code) + td(text, 'left', 3);
    return td('') + td('') + td('颜色键', 'right freeze-x') + td('') +
        item('E', '请假') + item('U', '无故缺席') + item('P', '到场') + item('N', '停课') + td('', '', 16) + free;
}

function studentRow(s) {
    const marks = days((i, day) => {
        const code = s.marks[day] || (i % 7 === 2 || i % 7 === 3 ? 'N' : 'P');
        return td(code, 'in ' + code);
    });
    const bar = s.absent ? `<div class="data-bar" style="width: ${s.absent * 3}%"></div>${s.absent}` : '';
    return td('') + td(s.id, 'in left') + td(s.name, 'in left freeze-x') + marks +
        s.sums.map(v => td(v, 'in')).join('') + td(bar, 'in absent') + free;
}

let html = columns() + header();
html += row(1, 'title-row', titleRow());
html += row(2, '', blank);
html += row(3, 'legend-row', legendRow());
html += row(4, '', blank);
html += row(5, 'week-row', td('') + td('14-八月', 'in month left', 2) +
    days(i => td(weekdays[i % 7], 'in day')) + td('总计', 'in', 5) + free);
html += row(6, 'date-row freeze-y', td('') + td('学生 ID', 'in left') + td('学生姓名', 'in left freeze-x') +
    days((i, day) => td(day, 'in')) + td('T', 'in T') + td('E', 'in U') + td('U', 'in E') + td('P', 'in P') +
    td('缺席天数', 'in left') + free);

students.forEach((s, i) => {
    let cls = 'record';
    if (i % 2 === 0) cls += ' odd';
    if (i % 2 === 1) cls += ' banded';
    if (i === students.length - 1) cls += ' last';
    html += row(7 + i, cls, studentRow(s));
});

html += row(12, 'record', td('') + td('', 'in') + td('总缺席天数', 'in left freeze-x') +
    days((i, day) => td(dayTotals[day] || '', 'in')) +
    [4, 10, 3, 98, 13].map(v => td(v, 'in')).join('') + free);

for (let n = 13; n <= rowCount; n++) {
    html += row(n, n % 2 ? 'odd' : '', blank);
}

grid.innerHTML = html;
```
